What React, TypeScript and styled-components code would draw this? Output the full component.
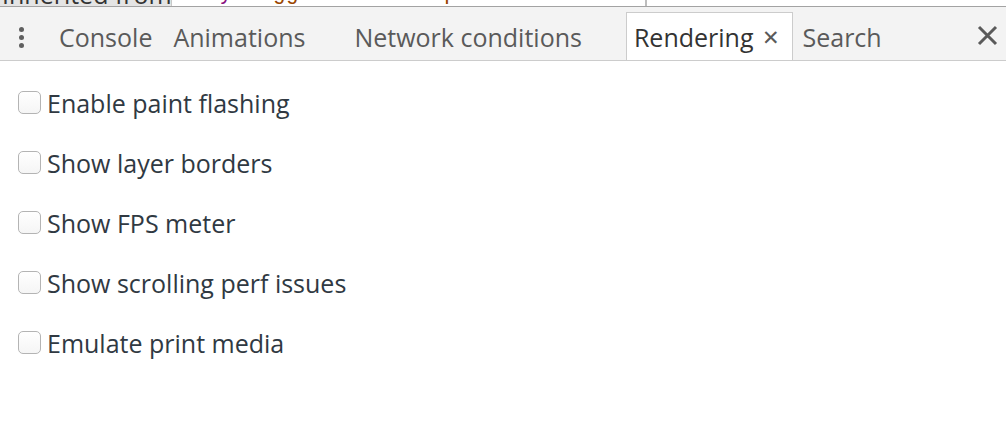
import React from "react";
import styled, { createGlobalStyle } from "styled-components";

const Global = createGlobalStyle`
  html, body { margin: 0; padding: 0; background: #fff; }
  body { font-family: "Open Sans", "Noto Sans", sans-serif; overflow: hidden; }
`;

const Page = styled.div`
  width: 1006px;
  height: 438px;
  display: flex;
  flex-direction: column;
  background: #fff;
`;

const Strip = styled.div`
  height: 6px;
  display: flex;
  overflow: hidden;
  border-bottom: 1px solid #a3a3a3;
  background: #fff;
`;

const InheritedBox = styled.div`
  width: 172px;
  background: #e4e4e4;
  border-right: 1px solid #c8c8c8;
  display: flex;
  align-items: flex-end;
  font-size: 25px;
  line-height: 24px;
  color: #333;
  white-space: nowrap;
  padding-left: 2px;
  box-sizing: border-box;
`;

const Selector = styled.div`
  width: 475px;
  display: flex;
  align-items: flex-end;
  font-family: "Liberation Mono", monospace;
  font-size: 22px;
  line-height: 24px;
  white-space: nowrap;
  padding-left: 8px;
  border-right: 2px solid #bdbdbd;
  box-sizing: border-box;
`;

const Tag = styled.span`
  color: #881280;
`;
const Cls = styled.span`
  color: #994500;
`;

const TabBar = styled.div`
  height: 54px;
  box-sizing: border-box;
  background: #f3f3f3;
  border-bottom: 1px solid #cccccc;
  display: flex;
  align-items: flex-end;
  font-size: 25px;
  color: #5a5a5a;
  position: relative;
`;

const Menu = styled.div`
  width: 42px;
  height: 53px;
  box-sizing: border-box;
  padding-top: 7px;
  display: flex;
  flex-direction: column;
  align-items: center;
  justify-content: center;
  gap: 3px;
  span {
    width: 5px;
    height: 5px;
    border-radius: 50%;
    background: #5f5f5f;
  }
`;

const Tab = styled.div<{ $active?: boolean; $gap?: number }>`
  height: ${(p) => (p.$active ? 48 : 53)}px;
  box-sizing: border-box;
  display: flex;
  align-items: center;
  padding: ${(p) => (p.$active ? "0 12px 0 7px" : "7px 10px 0")};
  margin-left: ${(p) => p.$gap ?? 0}px;
  white-space: nowrap;
  color: ${(p) => (p.$active ? "#333" : "#5a5a5a")};
  background: ${(p) => (p.$active ? "#fff" : "transparent")};
  border: ${(p) => (p.$active ? "1px solid #ccc" : "none")};
  border-bottom: none;
`;

const TabClose = styled.span`
  margin-left: 8px;
  font-size: 21px;
  color: #5a5a5a;
`;

const CloseButton = styled.div`
  position: absolute;
  right: 8px;
  top: 18px;
  width: 21px;
  height: 21px;
  display: flex;
`;

const Content = styled.div`
  display: flex;
  flex-direction: column;
  padding: 30px 0 0 18px;
  gap: 37px;
`;

const Row = styled.label`
  display: flex;
  align-items: center;
  height: 23px;
  font-size: 25px;
  color: #303942;
`;

const Box = styled.span`
  width: 23px;
  height: 23px;
  box-sizing: border-box;
  border: 1px solid #b4b4b4;
  border-radius: 5px;
  background: linear-gradient(#ffffff, #f5f5f5);
  margin-right: 6px;
  flex: none;
`;

const items = [
  "Enable paint flashing",
  "Show layer borders",
  "Show FPS meter",
  "Show scrolling perf issues",
  "Emulate print media",
];

export default function App() {
  return (
    <Page>
      <Global />
      <Strip>
        <InheritedBox>Inherited from</InheritedBox>
        <Selector>
          <Tag>body</Tag>
          <Cls>.logged-out.env-production.ma</Cls>
        </Selector>
      </Strip>
      <TabBar>
        <Menu>
          <span />
          <span />
          <span />
        </Menu>
        <Tab $gap={7}>Console</Tab>
        <Tab $gap={1}>Animations</Tab>
        <Tab $gap={29}>Network conditions</Tab>
        <Tab $active $gap={34}>
          Rendering<TabClose>✕</TabClose>
        </Tab>
        <Tab>Search</Tab>
        <CloseButton>
          <svg width="21" height="21" viewBox="0 0 21 21">
            <path d="M2 2 L19 19 M19 2 L2 19" stroke="#5a5a5a" strokeWidth="3" />
          </svg>
        </CloseButton>
      </TabBar>
      <Content>
        {items.map((t) => (
          <Row key={t}>
            <Box />
            {t}
          </Row>
        ))}
      </Content>
    </Page>
  );
}
